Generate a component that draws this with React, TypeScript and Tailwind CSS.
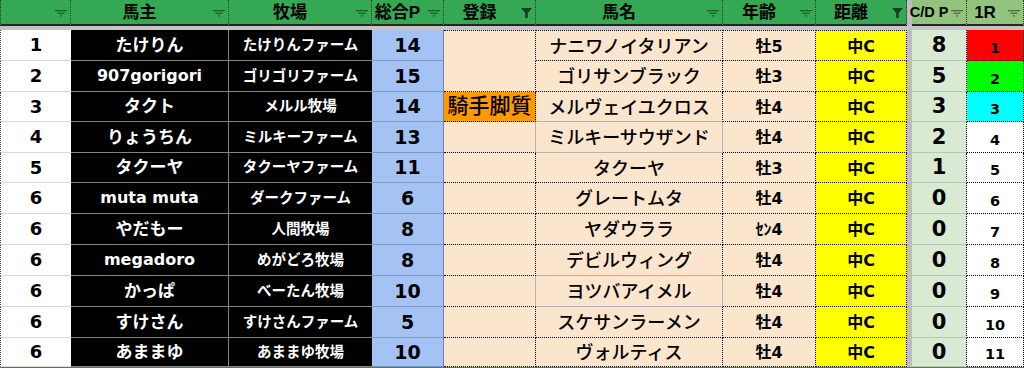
import React from 'react';

type Row = {
  rank: string;
  owner: string;
  latin?: boolean;
  farm: string;
  p: string;
  horse: string;
  age: string;
  cd: string;
  r: string;
  h: string;
  eCls: string;
  fCls: string;
  jBg: string;
};

const E_BASE = 'bg-[#fce5cd] border-r border-b border-dotted border-black';
const E_FIRST = 'bg-[#fce5cd] border-r border-t border-b border-dotted border-black border-b-transparent';
const E_ORANGE = 'bg-[#ff9900] border-r border-b border-dotted border-black';
const E_SOLIDR = 'bg-[#fce5cd] border-r border-b border-dotted border-black [border-right-style:solid] border-r-[#b4b4b4]';

const F_BASE = 'border-r border-b border-dotted border-black';
const F_FIRST = 'border-r border-t border-b border-dotted border-black';
const F_SOLIDB = 'border-r border-b border-dotted border-black [border-bottom-style:solid] border-b-[#b4b4b4]';
const F_BOX = 'border-r border-b border-solid border-[#b4b4b4]';

const rows: Row[] = [
  { rank: '1', owner: 'たけりん', farm: 'たけりんファーム', p: '14', horse: 'ナニワノイタリアン', age: '牡5', cd: '8', r: '1', h: 'h-[31px]', eCls: E_FIRST, fCls: F_FIRST, jBg: 'bg-[#ff0000]' },
  { rank: '2', owner: '907gorigori', latin: true, farm: 'ゴリゴリファーム', p: '15', horse: 'ゴリサンブラック', age: '牡3', cd: '5', r: '2', h: 'h-[31px]', eCls: E_BASE, fCls: F_BASE, jBg: 'bg-[#00ff00]' },
  { rank: '3', owner: 'タクト', farm: 'メルル牧場', p: '14', horse: 'メルヴェイユクロス', age: '牡4', cd: '3', r: '3', h: 'h-[30px]', eCls: E_ORANGE, fCls: F_SOLIDB, jBg: 'bg-[#00ffff]' },
  { rank: '4', owner: 'りょうちん', farm: 'ミルキーファーム', p: '13', horse: 'ミルキーサウザンド', age: '牡4', cd: '2', r: '4', h: 'h-[31px]', eCls: E_SOLIDR, fCls: F_BOX, jBg: 'bg-white' },
  { rank: '5', owner: 'タクーヤ', farm: 'タクーヤファーム', p: '11', horse: 'タクーヤ', age: '牡3', cd: '1', r: '5', h: 'h-[30px]', eCls: E_BASE, fCls: F_BASE, jBg: 'bg-white' },
  { rank: '6', owner: 'muta muta', latin: true, farm: 'ダークファーム', p: '6', horse: 'グレートムタ', age: '牡4', cd: '0', r: '6', h: 'h-[31px]', eCls: E_BASE, fCls: F_BASE, jBg: 'bg-white' },
  { rank: '6', owner: 'やだもー', farm: '人間牧場', p: '8', horse: 'ヤダウララ', age: 'ｾﾝ4', cd: '0', r: '7', h: 'h-[31px]', eCls: E_BASE, fCls: F_BASE, jBg: 'bg-white' },
  { rank: '6', owner: 'megadoro', latin: true, farm: 'めがどろ牧場', p: '8', horse: 'デビルウィング', age: '牡4', cd: '0', r: '8', h: 'h-[31px]', eCls: E_BASE, fCls: F_SOLIDB, jBg: 'bg-white' },
  { rank: '6', owner: 'かっぱ', farm: 'べーたん牧場', p: '10', horse: 'ヨツバアイメル', age: '牡4', cd: '0', r: '9', h: 'h-[31px]', eCls: E_SOLIDR, fCls: F_BOX, jBg: 'bg-white' },
  { rank: '6', owner: 'すけさん', farm: 'すけさんファーム', p: '5', horse: 'スケサンラーメン', age: '牡4', cd: '0', r: '10', h: 'h-[31px]', eCls: E_BASE, fCls: F_BASE, jBg: 'bg-white' },
  { rank: '6', owner: 'あままゆ', farm: 'あままゆ牧場', p: '10', horse: 'ヴォルティス', age: '牡4', cd: '0', r: '11', h: 'h-[29px]', eCls: E_BASE, fCls: F_BASE, jBg: 'bg-white' },
];

function FilterIcon() {
  return (
    <svg width="12" height="7" viewBox="0 0 12 7" className="block">
      <rect x="0" y="0" width="12" height="1.3" fill="rgba(0,0,0,0.45)" />
      <rect x="2.5" y="2.6" width="7" height="1.3" fill="rgba(0,0,0,0.45)" />
      <rect x="5" y="5.2" width="2" height="1.3" fill="rgba(0,0,0,0.45)" />
    </svg>
  );
}

function FunnelIcon() {
  return (
    <svg width="11" height="10" viewBox="0 0 11 10" className="block">
      <path d="M0 0 H11 L6.8 5 V10 H4.2 V5 Z" fill="#1c3a23" />
    </svg>
  );
}

type Head = { w: string; label: string; filtered?: boolean; light?: boolean; small?: boolean; first?: boolean };

const heads: Head[] = [
  { w: 'w-[71px]', label: '', first: true },
  { w: 'w-[158px]', label: '馬主' },
  { w: 'w-[143px]', label: '牧場' },
  { w: 'w-[72px]', label: '総合P' },
  { w: 'w-[92px]', label: '登録', filtered: true },
  { w: 'w-[187px]', label: '馬名' },
  { w: 'w-[93px]', label: '年齢' },
  { w: 'w-[91px]', label: '距離', filtered: true },
];

const headsRight: Head[] = [
  { w: 'w-[55px]', label: 'C/D P', light: true, small: true },
  { w: 'w-[57px]', label: '1R', light: true },
];

function HeadCell({ h }: { h: Head }) {
  return (
    <div
      className={`${h.w} shrink-0 h-[26px] flex items-center ${h.light ? 'bg-[#93c47d]' : 'bg-[#34a853]'} border-r border-dotted border-r-[#1b3a22] border-b-2 [border-bottom-style:solid] border-b-[#262626] ${h.first ? 'border-l [border-left-style:dotted] border-l-[#1b3a22]' : ''}`}
    >
      <div
        className={`flex-1 min-w-0 flex justify-center whitespace-nowrap font-bold text-black leading-none pt-[1px] font-['Liberation_Sans','Noto_Sans_CJK_JP',sans-serif] ${h.small ? 'text-[14.5px]' : 'text-[17px]'}`}
      >
        {h.label}
      </div>
      <div className="w-[20px] shrink-0 flex justify-end pr-[3px] pt-[2px]">
        {h.filtered ? <FunnelIcon /> : <FilterIcon />}
      </div>
    </div>
  );
}

const cellBase = 'shrink-0 flex items-center justify-center whitespace-nowrap leading-none';

export default function App() {
  return (
    <div className="w-[1024px] h-[368px] overflow-hidden bg-white font-['DejaVu_Sans','Noto_Sans_CJK_JP',sans-serif] text-black">
      {/* header */}
      <div className="flex">
        {heads.map((h, i) => (
          <HeadCell key={i} h={h} />
        ))}
        <div className="w-[5px] shrink-0 h-[26px] bg-[#bdbdbd]" />
        {headsRight.map((h, i) => (
          <HeadCell key={i} h={h} />
        ))}
      </div>
      {/* freeze band */}
      <div className="h-[4px] bg-[#c4c4c4]" />
      {/* rows */}
      {rows.map((r, i) => (
        <div key={i} className={`flex ${r.h}`}>
          <div className={`${cellBase} w-[71px] h-full bg-white border-l [border-left-style:dotted] border-l-[#444] border-b border-b-[#dadada] text-[18px] font-bold`}>
            {r.rank}
          </div>
          <div className={`${cellBase} w-[158px] h-full bg-black text-white font-bold border-r border-b border-[#828282] ${r.latin ? 'text-[16px]' : 'text-[17px]'}`}>
            {r.owner}
          </div>
          <div className={`${cellBase} w-[143px] h-full bg-black text-white font-bold border-b border-[#828282] text-[14.5px]`}>
            {r.farm}
          </div>
          <div className={`${cellBase} w-[72px] h-full bg-[#a4c2f4] border-b border-b-[#8197bb] border-r border-r-[#6d84a8] text-[19px] font-bold`}>
            {r.p}
          </div>
          <div className={`${cellBase} w-[92px] h-full ${r.eCls} text-[21px] font-medium`}>
            {i === 2 ? '騎手脚質' : ''}
          </div>
          <div className={`${cellBase} w-[187px] h-full bg-[#fce5cd] ${r.fCls} text-[18px] font-medium pt-[2px]`}>
            {r.horse}
          </div>
          <div className={`${cellBase} w-[93px] h-full bg-[#fce5cd] border-r border-b border-dotted border-black ${i === 0 ? 'border-t' : ''} text-[16px] font-bold pt-[2px]`}>
            {r.age}
          </div>
          <div className={`${cellBase} w-[91px] h-full bg-[#ffff00] border-r border-b border-dotted border-black ${i === 0 ? 'border-t' : ''} text-[16px] font-bold pt-[2px]`}>
            中C
          </div>
          <div className="w-[5px] shrink-0 h-full bg-[#bdbdbd]" />
          <div className={`${cellBase} w-[55px] h-full bg-[#d9ead3] border-b border-b-[#b7c8b1] border-r [border-right-style:dotted] border-r-black text-[21px] font-bold`}>
            {r.cd}
          </div>
          <div className={`shrink-0 flex items-end justify-center leading-none pb-[5px] w-[57px] h-full ${r.jBg} border-r border-b border-dotted border-black text-[14.5px] font-bold`}>
            {r.r}
          </div>
        </div>
      ))}
      <div className="h-[2px] bg-[#3d8a4b]" />
    </div>
  );
}
